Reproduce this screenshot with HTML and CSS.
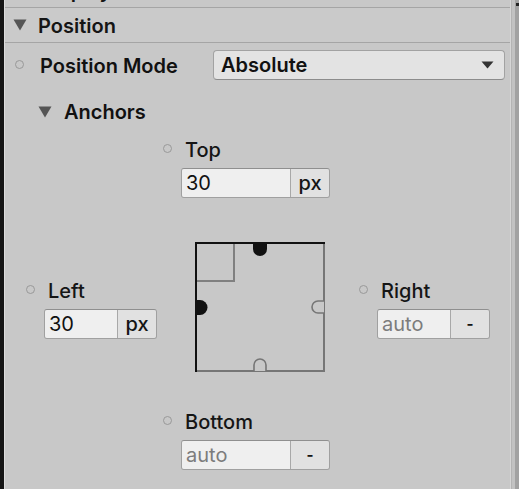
FILE: index.html
```html
<!DOCTYPE html>
<html>
<head>
<meta charset="utf-8">
<link rel="stylesheet" href="styles.css">
</head>
<body>
<div class="app">
  <div class="leftbar"></div>
  <div class="leftedge"></div>
  <div class="panel">
    <div class="cut"><span class="cut-text">Display</span></div>
    <div class="header">
      <svg class="tri" width="14" height="12" viewBox="0 0 14 12"><polygon points="0.5,0.5 13.5,0.5 7,11.5" fill="#555"/></svg>
      <span class="header-text">Position</span>
    </div>
    <div class="prop-row">
      <div class="prop-label"><span class="dot"></span><span class="bold">Position Mode</span></div>
      <div class="dropdown">
        <span class="bold">Absolute</span>
        <svg width="13" height="8" viewBox="0 0 13 8"><polygon points="0.5,0.5 12.5,0.5 6.5,7.5" fill="#333"/></svg>
      </div>
    </div>
    <div class="anchors-head">
      <svg class="tri" width="14" height="12" viewBox="0 0 14 12"><polygon points="0.5,0.5 13.5,0.5 7,11.5" fill="#555"/></svg>
      <span class="bold">Anchors</span>
    </div>
    <div class="anchors">
      <div class="row-top">
        <div class="fg">
          <div class="fg-label"><span class="dot"></span><span>Top</span></div>
          <div class="field wide"><span class="val">30</span><span class="unit">px</span></div>
        </div>
      </div>
      <div class="row-mid">
        <div class="fg">
          <div class="fg-label"><span class="dot"></span><span>Left</span></div>
          <div class="field narrow"><span class="val">30</span><span class="unit">px</span></div>
        </div>
        <svg class="diagram" width="130" height="130" viewBox="0 0 130 130">
          <line x1="129" y1="0" x2="129" y2="130" stroke="#767676" stroke-width="2"/>
          <line x1="0" y1="129" x2="130" y2="129" stroke="#767676" stroke-width="2"/>
          <line x1="39" y1="0" x2="39" y2="40" stroke="#808080" stroke-width="2"/>
          <line x1="0" y1="39" x2="40" y2="39" stroke="#808080" stroke-width="2"/>
          <line x1="0" y1="1" x2="130" y2="1" stroke="#111" stroke-width="2"/>
          <line x1="1" y1="0" x2="1" y2="130" stroke="#111" stroke-width="2"/>
          <path d="M58,1 L58,7 A7,7 0 0 0 72,7 L72,1 Z" fill="#111"/>
          <path d="M1,58 L5,58 A7.5,7.5 0 0 1 5,73 L1,73 Z" fill="#111"/>
          <path d="M129,59 L123,59 A6,6 0 0 0 123,71 L129,71" fill="#c8c8c8" stroke="#767676" stroke-width="1.6"/>
          <path d="M59,129 L59,123 A6,6 0 0 1 71,123 L71,129" fill="#c8c8c8" stroke="#767676" stroke-width="1.6"/>
        </svg>
        <div class="fg">
          <div class="fg-label"><span class="dot"></span><span>Right</span></div>
          <div class="field narrow"><span class="val auto">auto</span><span class="unit dash">-</span></div>
        </div>
      </div>
      <div class="row-bottom">
        <div class="fg">
          <div class="fg-label"><span class="dot"></span><span>Bottom</span></div>
          <div class="field wide"><span class="val auto">auto</span><span class="unit dash">-</span></div>
        </div>
      </div>
    </div>
  </div>
  <div class="scrollbar"><span class="sb-mark"></span></div>
</div>
</body>
</html>
```
FILE: styles.css
```css
html, body {
  margin: 0;
  padding: 0;
}
body {
  width: 519px;
  height: 489px;
  overflow: hidden;
  background: #c8c8c8;
  font-family: Inter, "Noto Sans", sans-serif;
  font-size: 20px;
  color: #151515;
}
.app {
  display: flex;
  height: 489px;
}
.leftbar {
  width: 4px;
  background: #151515;
  flex: 0 0 4px;
}
.leftedge {
  width: 1px;
  flex: 0 0 1px;
  background: #dcdcdc;
}
.panel {
  flex: 0 0 505px;
  display: flex;
  flex-direction: column;
  background: #c8c8c8;
}
.scrollbar {
  flex: 1;
  background: linear-gradient(to right, #d6d6d6 0 1px, #b4b4b4 1px 2px, #c2c2c2 2px 5px, #a2a2a2 5px);
  position: relative;
}
.sb-mark {
  position: absolute;
  right: 0;
  top: 3px;
  width: 3px;
  height: 3px;
  background: #222;
}
.cut {
  height: 7px;
  overflow: hidden;
  display: flex;
  align-items: flex-end;
  padding-left: 35px;
}
.cut-text {
  font-weight: 600;
  line-height: 20px;
  padding-bottom: 6px;
}
.header {
  height: 34px;
  border-top: 1px solid #a5a5a5;
  border-bottom: 1px solid #a5a5a5;
  background: #cacaca;
  display: flex;
  align-items: center;
  padding-left: 8px;
}
.header .tri {
  margin-right: 11px;
}
.header-text {
  font-weight: 600;
  line-height: 24px;
  padding-top: 2px;
}
.bold {
  font-weight: 600;
  color: #111;
}
.prop-row {
  margin-top: 7px;
  height: 30px;
  display: flex;
  align-items: center;
  padding-left: 10px;
  padding-right: 5px;
}
.prop-label {
  flex: 0 0 198px;
  display: flex;
  align-items: center;
  line-height: 24px;
  padding-top: 2px;
}
.prop-label .dot {
  margin-right: 16px;
  margin-top: -4px;
}
.dot {
  display: inline-block;
  width: 9px;
  height: 9px;
  box-sizing: border-box;
  border: 1.5px solid #999;
  border-radius: 50%;
  flex: 0 0 9px;
}
.dropdown {
  flex: 1;
  height: 30px;
  box-sizing: border-box;
  background: #e3e3e3;
  border: 1px solid #a2a2a2;
  border-bottom-color: #8c8c8c;
  border-radius: 4px;
  display: flex;
  align-items: center;
  justify-content: space-between;
  padding: 0 10px 0 7px;
  line-height: 24px;
}
.anchors-head {
  margin-top: 20px;
  height: 24px;
  display: flex;
  align-items: center;
  padding-left: 33px;
}
.anchors-head .tri {
  margin-right: 12px;
}
.anchors {
  display: flex;
  flex-direction: column;
}
.row-top {
  margin-top: 14px;
  padding-left: 176px;
  display: flex;
}
.row-mid {
  margin-top: 44px;
  padding-left: 39px;
  display: flex;
  align-items: center;
}
.row-mid .fg {
  padding-top: 3px;
}
.row-mid .diagram {
  margin-left: 38px;
  margin-right: 52px;
  flex: 0 0 130px;
}
.row-bottom {
  margin-top: 38px;
  padding-left: 176px;
  display: flex;
}
.fg {
  display: flex;
  flex-direction: column;
}
.fg-label {
  display: flex;
  align-items: center;
  line-height: 24px;
  margin-left: -18px;
  font-weight: 500;
  color: #151515;
}
.fg-label .dot {
  margin-right: 13px;
  margin-top: -3px;
}
.field {
  margin-top: 6px;
  height: 30px;
  box-sizing: border-box;
  display: flex;
  border: 1px solid #a0a0a0;
  border-top-color: #8f8f8f;
  border-radius: 3px;
  overflow: hidden;
  line-height: 28px;
}
.field.wide {
  width: 149px;
}
.field.narrow {
  width: 113px;
}
.val {
  flex: 1;
  background: #efefef;
  padding-left: 4px;
  border-right: 1px solid #a8a8a8;
  color: #111;
}
.val.auto {
  color: #7c7c7c;
}
.unit {
  flex: 0 0 38px;
  background: #e1e1e1;
  text-align: center;
  font-weight: 500;
  color: #151515;
}
.unit.dash {
  font-weight: 700;
  font-size: 15px;
}
```
